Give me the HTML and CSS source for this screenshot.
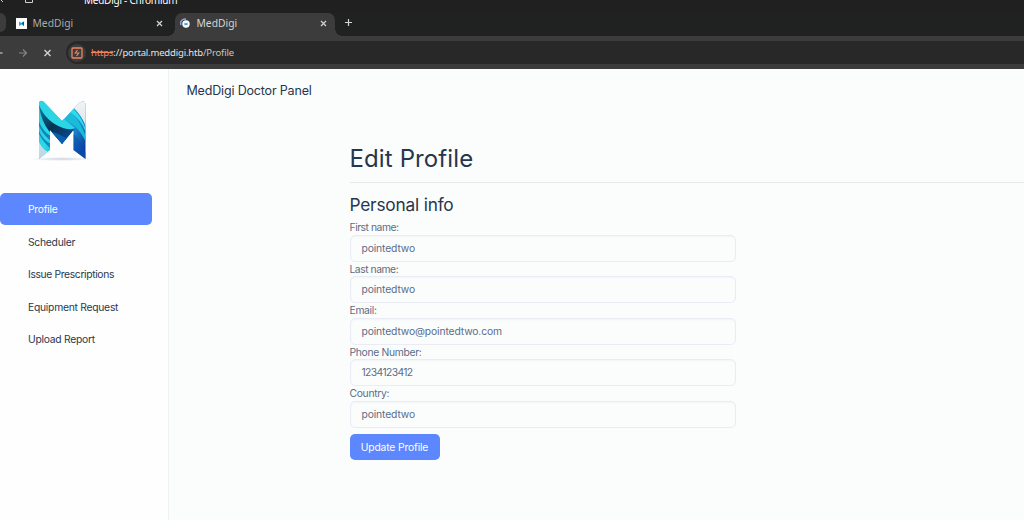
FILE: index.html
```html
<!DOCTYPE html>
<html lang="en">
<head>
<meta charset="utf-8">
<title>MedDigi</title>
<link rel="stylesheet" href="styles.css">
</head>
<body>
<header class="browser">
  <div class="titlebar">
    <svg class="title-icons" width="40" height="8" viewBox="0 0 40 8" fill="none" stroke="#d0d0d0"><path d="M0 -1l3 3M25.500 -2v4.500h7v-4.500M29 -.5h5.500v-2"/></svg>
    <span class="window-title">MedDigi - Chromium</span>
  </div>
  <div class="tabs">
    <div class="tab-stub"></div>
    <div class="tab">
      <svg class="favicon" width="11" height="11" viewBox="0 0 11 11"><path fill="#fff" d="M0 0h11v11H0z"/><path fill="#27a9d4" d="M3 3.500l2.500 1.500L8 3.500V8L5.500 6.500 3 8z"/><path fill="#164fa0" d="M5.500 5L8 3.500V8L6.500 6z"/></svg>
      <span class="tab-name">MedDigi</span>
      <svg class="close" width="7" height="7" viewBox="0 0 7 7"><path d="M1 1l5 5M6 1L1 6"/></svg>
    </div>
    <div class="tab active">
      <svg class="favicon" width="11" height="11" viewBox="0 0 11 11"><path d="M1 7C-.2 3.500 2 .8 6 1" fill="none" stroke="#8ba7d8" stroke-width="1.500"/><circle cx="6" cy="6" r="3.700" fill="#fff"/><path fill="#279fc6" d="M4.500 4.500L6 5.500l1.500-1v3L6 6.700l-1.500.8z"/></svg>
      <span class="tab-name">MedDigi</span>
      <svg class="close" width="7" height="7" viewBox="0 0 7 7"><path d="M1 1l5 5M6 1L1 6"/></svg>
    </div>
    <svg class="new-tab" width="9" height="9" viewBox="0 0 9 9"><path d="M4.500 1v7M1 4.500h7"/></svg>
  </div>
  <div class="toolbar">
    <svg class="nav-icons" width="56" height="14" viewBox="0 0 56 14" fill="none" stroke-width="1.200"><path stroke="#c8c8c8" d="M0 7h2.500"/><path stroke="#858585" d="M19 7h7.500M23 3.500L26.500 7 23 10.500"/><path stroke="#d2d2d2" stroke-width="1.400" d="M44.500 4l6 6M50.500 4l-6 6"/></svg>
    <div class="omnibox">
      <span class="site-info"><svg width="12" height="12" viewBox="0 0 12 12" fill="none" stroke="#f08560"><rect x="1" y="1" width="10" height="10" rx="1" stroke-width="1.300"/><path d="M6.500 3L4.300 6h3.400L5.500 9" stroke-width="1.200"/></svg></span>
      <span class="url"><s>https</s>://portal.meddigi.htb<span class="path">/Profile</span></span>
    </div>
  </div>
</header>
<div class="app">
  <aside class="sidebar">
    <svg class="logo" width="66" height="64" viewBox="0 0 66 64">
      <defs>
        <linearGradient id="cyan" x1="0" y1="0" x2="1" y2="1"><stop offset="0" stop-color="#20c2d4"/><stop offset=".5" stop-color="#2cd9ea"/><stop offset="1" stop-color="#159ac8"/></linearGradient>
        <linearGradient id="right" x1="0" y1="0" x2=".5" y2="1"><stop offset="0" stop-color="#36dce8"/><stop offset=".5" stop-color="#1f9bd8"/><stop offset="1" stop-color="#0c3f9d"/></linearGradient>
        <linearGradient id="navy" x1="0" y1="0" x2="1" y2="1"><stop offset="0" stop-color="#087fa8"/><stop offset=".45" stop-color="#073350"/><stop offset="1" stop-color="#0753ae"/></linearGradient>
        <linearGradient id="silver" x1="0" y1="0" x2="0" y2="1"><stop offset="0" stop-color="#f3f4f5"/><stop offset="1" stop-color="#b9d7e3"/></linearGradient>
        <radialGradient id="shade"><stop offset="0" stop-color="#9dabc5" stop-opacity=".5"/><stop offset="1" stop-color="#9dabc5" stop-opacity="0"/></radialGradient>
        <clipPath id="m"><path d="M10 60V4Q11 0 15 3L33 22 50 4Q56 0 56.500 5V60L44.500 51V31L33 45 21 31V51Z"/></clipPath>
      </defs>
      <ellipse cx="33" cy="60" rx="32" ry="2" fill="url(#shade)"/>
      <g clip-path="url(#m)">
        <path fill="url(#cyan)" d="M9 0h25v62H9z"/>
        <path fill="url(#right)" d="M33 0h24v62H33z"/>
        <path fill="#2bd5e4" d="M9 0h7L36 21 46 29 34 33Q15 22 9 3z"/>
        <path fill="url(#navy)" d="M10 6Q17 23 34 29 40 31 46 30L33 46 20 32Q12 22 10 6z"/>
        <path fill="#0a5fae" d="M21 32Q31 35 38 40L33 46z"/>
        <path fill="#1386b8" d="M10 23Q15 34 22 37v5Q14 36 10 27z"/>
        <path fill="#1688bd" d="M10 32Q14 41 22 45v5Q14 43 10 35z"/>
        <path fill="#1abbd8" d="M36 21Q49 26 57 43v-5Q52 23 42 13z"/>
        <path fill="#31dbe8" d="M41 13Q52 20 57 34v-3Q53 18 44 10z"/>
        <path fill="#0752b3" d="M43 34Q51 40 57 54v10L43 51z" opacity=".5"/>
        <path fill="url(#silver)" d="M45 9L52 0h5v28Q53 17 45 9zM9 40Q12 50 19 53L9 61z"/>
      </g>
    </svg>
    <nav class="menu">
      <a class="item current">Profile</a>
      <a class="item">Scheduler</a>
      <a class="item tight">Issue Prescriptions</a>
      <a class="item">Equipment Request</a>
      <a class="item">Upload Report</a>
    </nav>
  </aside>
  <main class="content">
    <div class="panel-name">MedDigi Doctor Panel</div>
    <section class="profile">
      <h1>Edit Profile</h1>
      <h2>Personal info</h2>
      <form class="form">
        <label class="tight">First name:</label><div class="field">pointedtwo</div>
        <label class="tight">Last name:</label><div class="field">pointedtwo</div>
        <label>Email:</label><div class="field">pointedtwo@pointedtwo.com</div>
        <label>Phone Number:</label><div class="field phone">1234123412</div>
        <label>Country:</label><div class="field">pointedtwo</div>
        <button type="button" class="update">Update Profile</button>
      </form>
    </section>
  </main>
</div>
</body>
</html>
```

FILE: styles.css
```css
* { box-sizing: border-box; }
body { margin: 0; width: 1024px; height: 520px; overflow: hidden; font-family: Inter, "Noto Sans", sans-serif; color: #283950; background: #fbfdfd; }
svg { display: block; flex: none; }
.browser { height: 69px; background: #202222; font-family: "Noto Sans", sans-serif; }
.titlebar { height: 13px; display: flex; overflow: hidden; background: #202020; }
.window-title { margin: -7px 0 0 44px; font-size: 10px; line-height: 14px; letter-spacing: -.25px; color: #fff; white-space: nowrap; }
.tabs { height: 23px; display: flex; }
.tab-stub { width: 6px; height: 19px; background: #3c3c3c; border-radius: 0 6px 6px 0; }
.tab { width: 169px; height: 20px; display: flex; align-items: center; padding: 0 12px 0 10px; color: #a9abab; font-size: 10.3px; }
.tab-name { margin: -1px 0 0 5.500px; flex: 1; }
.close, .new-tab { fill: none; stroke: #d4d4d4; stroke-width: 1.2; }
.tab.active { position: relative; width: 160px; height: 23px; padding: 0 8px 3px 5px; background: #3c3c3c; border-radius: 7px 7px 0 0; color: #d5d5d5; }
.tab.active::before, .tab.active::after { content: ""; position: absolute; bottom: 0; width: 7px; height: 7px; }
.tab.active::before { left: -7px; background: radial-gradient(circle at 0 0, transparent 6.5px, #3c3c3c 7px); }
.tab.active::after { right: -7px; background: radial-gradient(circle at 100% 0, transparent 6.5px, #3c3c3c 7px); }
.new-tab { margin: 5px 0 0 9px; }
.toolbar { height: 33px; display: flex; align-items: center; background: #3c3c3c; }
.omnibox { margin-left: 10px; flex: 1; height: 23px; display: flex; align-items: center; background: #282828; border-radius: 12px 0 0 12px; }
.site-info { width: 18px; height: 18px; margin-left: 2px; border-radius: 50%; background: #3c3c3c; display: grid; place-items: center; }
.url { margin-left: 5px; font-size: 9.5px; letter-spacing: -.17px; color: #e4e4e4; white-space: nowrap; }
.url s { color: #f08560; }
.path { color: #c4c4c4; }
.app { display: flex; height: 451px; }
.sidebar { width: 169px; border-right: 1px solid #edf2f3; background: #fefefe; }
.logo { margin: 30px 0 0 28.5px; }
.menu { margin-top: 30.4px; display: flex; flex-direction: column; gap: 1px; }
.item { height: 31.5px; width: 152px; padding: 0 0 0 28px; display: flex; align-items: center; font-size: 10.3px; letter-spacing: -.25px; white-space: nowrap; }
.item.tight { letter-spacing: -.35px; }
.item.current { background: #5d87ff; color: #fff; border-radius: 5px; }
.content { flex: 1; min-width: 0; padding: 14px 0 0 17.5px; }
.panel-name { font-size: 12.5px; line-height: 16px; letter-spacing: -.17px; color: #26364c; }
.profile { margin: 42px 0 0 163px; }
h1, h2 { margin: 0; font-weight: 400; color: #26364c; }
h1 { height: 42px; font-size: 24px; line-height: 35px; letter-spacing: .12px; border-bottom: 1px solid #e6e9ea; }
h2 { height: 37px; padding-top: 9px; font-size: 17.3px; line-height: 26px; letter-spacing: -.2px; }
.form { width: 386.5px; display: flex; flex-direction: column; color: #5c6c86; font-size: 10.3px; }
.form label { height: 14.5px; line-height: 15px; letter-spacing: -.3px; }
.form label.tight { letter-spacing: -.45px; }
.field { height: 27px; display: flex; align-items: center; padding: 0 0 1px 11px; border: 1px solid #e9ecf4; border-radius: 5px; box-shadow: inset 0 1px 2px rgba(60, 75, 120, .05); letter-spacing: -.12px; }
.field.phone { letter-spacing: -.6px; }
.update { width: 90px; height: 26px; margin-top: 6px; border: 0; border-radius: 5px; padding: 0; background: #5d87ff; color: #fff; font: 400 10.3px Inter, sans-serif; letter-spacing: -.15px; }
```
